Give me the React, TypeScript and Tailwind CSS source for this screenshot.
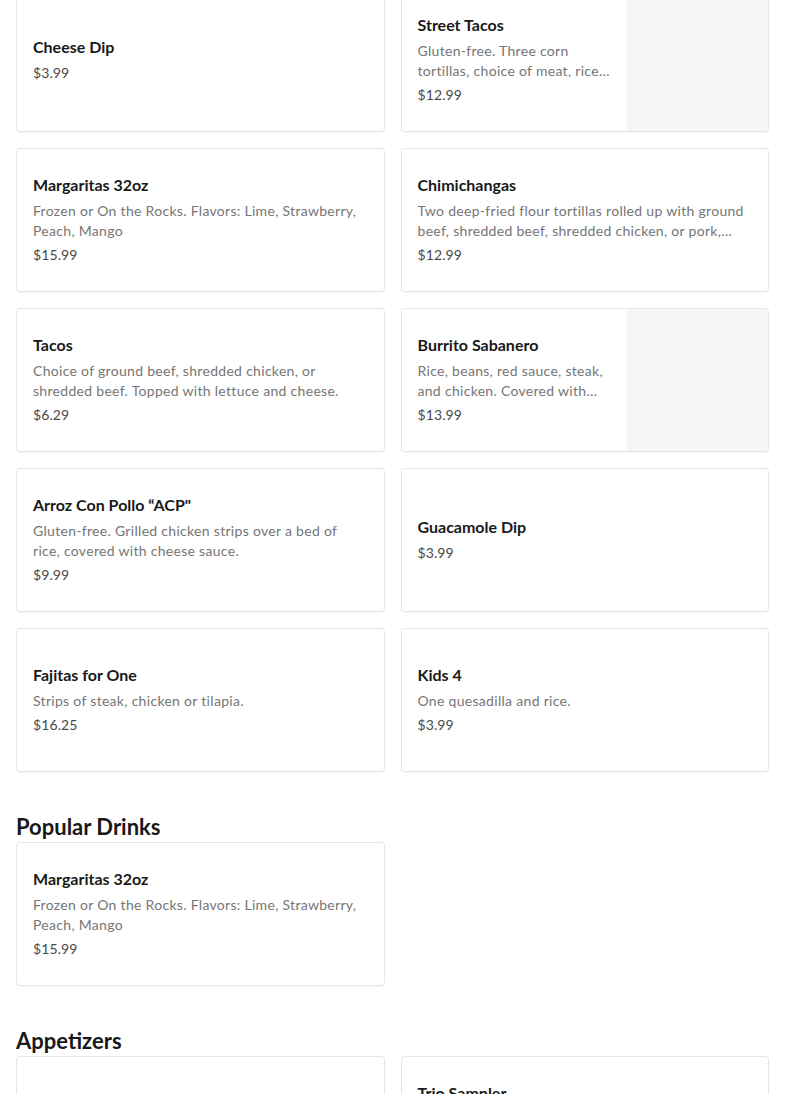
import React from "react";

type Item = {
  name: string;
  desc?: string;
  price: string;
  image?: boolean;
};

const popularItems: Item[] = [
  { name: "Cheese Dip", price: "$3.99" },
  {
    name: "Street Tacos",
    desc: "Gluten-free. Three corn tortillas, choice of meat, rice, beans, onions and cilantro.",
    price: "$12.99",
    image: true,
  },
  {
    name: "Margaritas 32oz",
    desc: "Frozen or On the Rocks. Flavors: Lime, Strawberry, Peach, Mango",
    price: "$15.99",
  },
  {
    name: "Chimichangas",
    desc: "Two deep-fried flour tortillas rolled up with ground beef, shredded beef, shredded chicken, or pork, topped with cheese sauce.",
    price: "$12.99",
  },
  {
    name: "Tacos",
    desc: "Choice of ground beef, shredded chicken, or shredded beef. Topped with lettuce and cheese.",
    price: "$6.29",
  },
  {
    name: "Burrito Sabanero",
    desc: "Rice, beans, red sauce, steak, and chicken. Covered with cheese sauce.",
    price: "$13.99",
    image: true,
  },
  {
    name: "Arroz Con Pollo \u201cACP\"",
    desc: "Gluten-free. Grilled chicken strips over a bed of rice, covered with cheese sauce.",
    price: "$9.99",
  },
  { name: "Guacamole Dip", price: "$3.99" },
  {
    name: "Fajitas for One",
    desc: "Strips of steak, chicken or tilapia.",
    price: "$16.25",
  },
  { name: "Kids 4", desc: "One quesadilla and rice.", price: "$3.99" },
];

const drinks: Item[] = [
  {
    name: "Margaritas 32oz",
    desc: "Frozen or On the Rocks. Flavors: Lime, Strawberry, Peach, Mango",
    price: "$15.99",
  },
];

const appetizers: Item[] = [
  { name: "Nachos", price: "$7.99" },
  {
    name: "Trio Sampler",
    desc: "Cheese dip, guacamole dip and bean dip served with chips and salsa.",
    price: "$11.99",
  },
];

function MenuCard({ item }: { item: Item }) {
  return (
    <div className="flex h-[144px] overflow-hidden rounded-[4px] border border-[#e6e6e6] bg-white shadow-[0_1px_1px_rgba(0,0,0,0.04)]">
      <div className="flex min-w-0 flex-1 flex-col justify-center px-4 pb-[3px]">
        <div className="text-[16px] font-bold leading-6 text-[#191919]">{item.name}</div>
        {item.desc && (
          <div className="mt-1 line-clamp-2 text-[14px] leading-5 tracking-[0.3px] text-[#767676]">
            {item.desc}
          </div>
        )}
        <div className="mt-1 text-[14px] leading-5 tracking-[0.1px] text-[#494949]">{item.price}</div>
      </div>
      {item.image && <div className="w-[142px] shrink-0 bg-[#f6f6f6]" />}
    </div>
  );
}

function Section({ title, items }: { title: string; items: Item[] }) {
  return (
    <section className="mt-10">
      <h2 className="text-[22px] font-bold leading-[30px] text-[#191919]">{title}</h2>
      <div className="grid grid-cols-2 gap-4">
        {items.map((item, i) => (
          <MenuCard key={i} item={item} />
        ))}
      </div>
    </section>
  );
}

export default function App() {
  return (
    <div
      className="h-[1094px] overflow-hidden bg-white px-4"
      style={{ fontFamily: "Lato, 'Noto Sans', sans-serif" }}
    >
      {/* list is scrolled, first row cut at the top */}
      <div className="mt-[-12px] grid grid-cols-2 gap-4">
        {popularItems.map((item, i) => (
          <MenuCard key={i} item={item} />
        ))}
      </div>
      <Section title="Popular Drinks" items={drinks} />
      <Section title="Appetizers" items={appetizers} />
    </div>
  );
}
